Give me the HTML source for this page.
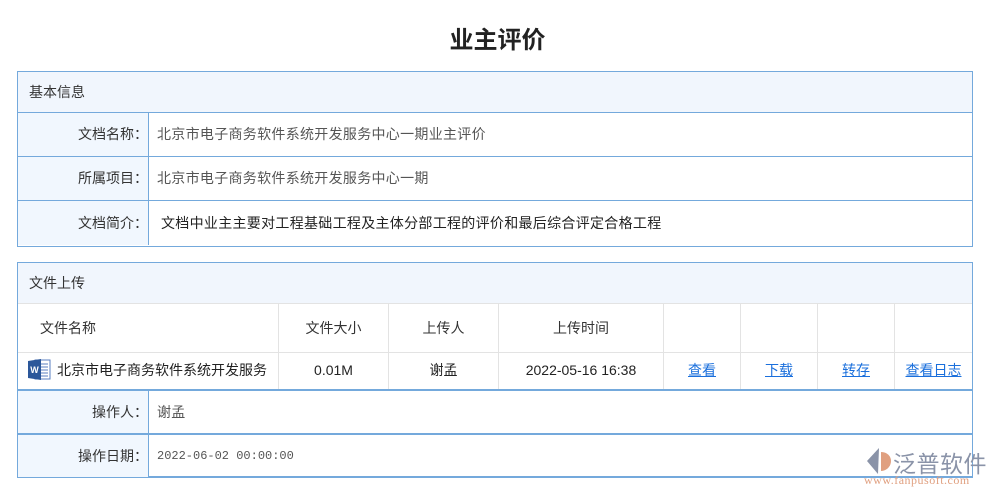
<!DOCTYPE html>
<html><head><meta charset="utf-8"><style>
body{margin:0;width:995px;height:493px;background:#fff;font-family:"Liberation Sans","Noto Sans CJK SC",sans-serif;font-size:14px;color:#333;position:relative;overflow:hidden}
.t{position:absolute;left:0;width:995px;top:20px;text-align:center;font-size:24px;font-weight:bold;color:#222}
.box{position:absolute;left:17px;width:954px;border:1px solid #74a9dc}
.hd{background:#f1f6fd;height:40px;line-height:40px;padding-left:11px;border-bottom:1px solid #74a9dc}
.r{display:flex;border-top:1px solid #74a9dc}
.l{width:131px;background:#f1f7fe;border-right:1px solid #74a9dc;text-align:right;padding-right:0;box-sizing:border-box;margin-right:-4px;position:relative}
.l span{position:relative;left:4px}
.v{padding-left:12px;color:#555;letter-spacing:0.3px}
.a{position:absolute;border-right:1px solid #e3e3e3;box-sizing:border-box;text-align:center}
a{color:#1a6fdc;text-decoration:underline}
</style></head><body>
<div class="t">业主评价</div>
<div class="box" style="top:71px;height:174px">
<div class="hd">基本信息</div>
<div style="display:flex;height:43px;line-height:43px"><div class="l">文档名称：</div><div class="v">北京市电子商务软件系统开发服务中心一期业主评价</div></div>
<div class="r" style="height:43px;line-height:43px"><div class="l">所属项目：</div><div class="v">北京市电子商务软件系统开发服务中心一期</div></div>
<div class="r" style="height:44px;line-height:44px"><div class="l">文档简介：</div><div class="v" style="padding-left:16px;color:#222">文档中业主主要对工程基础工程及主体分部工程的评价和最后综合评定合格工程</div></div>
</div>
<div class="box" style="top:262px;height:213px;border-bottom:2px solid #74a9dc">
<div class="hd" style="border-bottom:1px solid #e3e3e3">文件上传</div>
<div style="position:relative;height:85px;border-bottom:2px solid #74a9dc">
<div style="position:absolute;left:0;right:0;top:48px;border-top:1px solid #e3e3e3"></div>
<div class="a" style="left:0;width:261px;height:85px;text-align:left"><div style="height:48px;line-height:48px;padding-left:22px">文件名称</div><div style="height:36px;line-height:36px;padding-left:10px;color:#222;white-space:nowrap"><svg width="23" height="23" viewBox="0 0 23 23" style="vertical-align:-6px;margin-right:6px"><rect x="7" y="2" width="15" height="19" fill="#fff" stroke="#5a7fc0"/><path d="M10 6h10M10 9h10M10 12h10M10 15h10M10 18h10" stroke="#5a7fc0"/><path d="M0 3l13-2v21l-13-2z" fill="#2b579a"/><text x="6.5" y="15" font-size="9" fill="#fff" text-anchor="middle" font-weight="bold" font-family="Liberation Sans">W</text></svg>北京市电子商务软件系统开发服务</div></div>
<div class="a" style="left:261px;width:110px;height:85px"><div style="height:48px;line-height:48px">文件大小</div><div style="line-height:36px;color:#222">0.01M</div></div>
<div class="a" style="left:371px;width:110px;height:85px"><div style="height:48px;line-height:48px">上传人</div><div style="line-height:36px;color:#222">谢孟</div></div>
<div class="a" style="left:481px;width:165px;height:85px"><div style="height:48px;line-height:48px">上传时间</div><div style="line-height:36px;color:#222">2022-05-16 16:38</div></div>
<div class="a" style="left:646px;width:77px;height:85px"><div style="height:48px"></div><div style="line-height:36px"><a>查看</a></div></div>
<div class="a" style="left:723px;width:77px;height:85px"><div style="height:48px"></div><div style="line-height:36px"><a>下载</a></div></div>
<div class="a" style="left:800px;width:77px;height:85px"><div style="height:48px"></div><div style="line-height:36px"><a>转存</a></div></div>
<div class="a" style="left:877px;width:77px;height:85px;border:none"><div style="height:48px"></div><div style="line-height:36px"><a>查看日志</a></div></div>
</div>
<div style="display:flex;height:42px;line-height:42px;border-bottom:2px solid #74a9dc"><div class="l">操作人：</div><div class="v">谢孟</div></div>
<div style="display:flex;height:42px;line-height:42px"><div class="l">操作日期：</div><div class="v" style="font-family:'Liberation Mono',monospace;font-size:12px;letter-spacing:0">2022-06-02 00:00:00</div></div>
</div>
<div style="position:absolute;left:864px;top:446px;width:131px;height:47px">
<svg width="26" height="28" viewBox="0 0 26 28" style="position:absolute;left:2px;top:1px"><path d="M13 1L1 14l11 13z" fill="#8a93a8"/><path d="M15 5c6 0 10 4 10 9s-4 10-10 10z" fill="#e0a080"/></svg>
<div style="position:absolute;left:29px;top:-1px;font-size:23px;color:#8a93a8;letter-spacing:0.5px;white-space:nowrap">泛普软件</div>
<div style="position:absolute;left:0;top:27px;font-size:12px;color:#e0a080;font-family:'Liberation Serif',serif;letter-spacing:0.5px">www.fanpusoft.com</div>
</div>
</body></html>
